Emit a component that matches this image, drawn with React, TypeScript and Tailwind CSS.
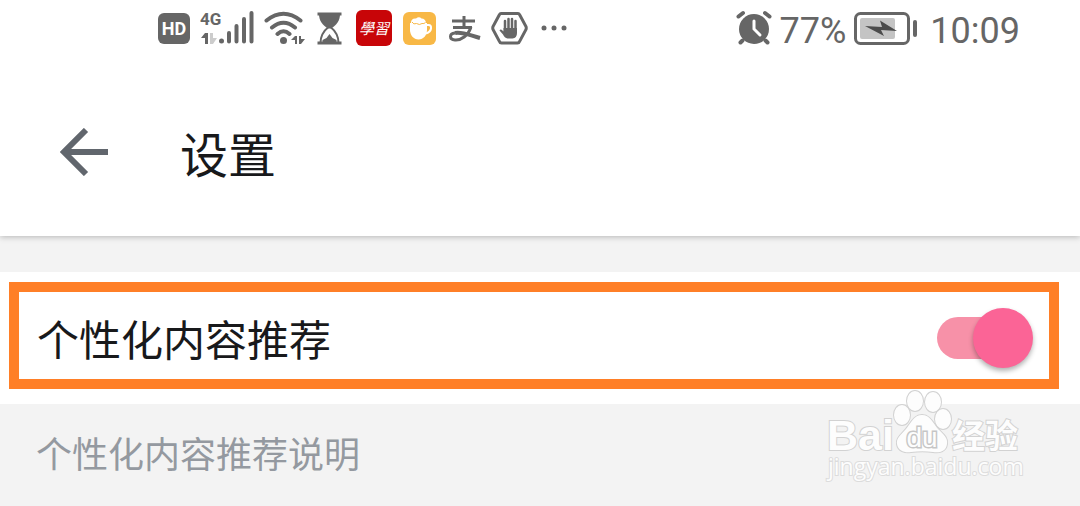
import { useState } from "react";

function HdIcon() {
  return (
    <svg width="32" height="40" viewBox="0 0 32 40" aria-label="HD">
      <rect y="5" width="32" height="31" rx="6" fill="#666" />
      <text x="16" y="27" textAnchor="middle" fontSize="18" fontWeight="700" fill="#fff">
        HD
      </text>
    </svg>
  );
}

function SignalIcon() {
  return (
    <svg width="54" height="40" viewBox="0 0 54 40" aria-label="4G">
      <text x="0" y="17" fontSize="17" fontWeight="700" fill="#666">
        4G
      </text>
      <path d="M5 25h3v11H5v-6H1z" fill="#666" />
      <path d="M10 25h3v5h4l-4 6h-3z" fill="#ccc" />
      <circle cx="21.500" cy="33" r="2.500" fill="#666" />
      <path d="M29 25v8.500M36.500 18v15.500M44 11v22.500M51.500 5v28.500" stroke="#666" strokeWidth="4" strokeLinecap="round" />
    </svg>
  );
}

function WifiIcon() {
  return (
    <svg width="42" height="40" viewBox="0 0 42 40" aria-label="Wi-Fi" fill="none">
      <path d="M2.500 12.500Q19.500-1 36.500 12.500M8 19.500Q19.500 10 31 19.500M13.500 26Q19.500 20.500 25.500 26" stroke="#666" strokeWidth="4" strokeLinecap="round" />
      <circle cx="19.500" cy="32.500" r="3.500" fill="#666" />
      <path d="M31 28h2v8h-2v-4h-4zM35 28h2v3h4l-4 5h-2z" fill="#666" />
    </svg>
  );
}

function HourglassIcon() {
  return (
    <svg width="30" height="40" viewBox="0 0 30 40" aria-hidden="true" fill="none">
      <path d="M1.500 6h24M1.500 35h24" stroke="#666" strokeWidth="3" />
      <path d="M3 6h21c0 7-3.500 11-9 14.500h-3C6.500 17 3 13 3 6z" fill="#666" />
      <path d="M12.500 19C7.500 23 4.500 27 4.500 35M14.500 19c5 4 8 8 8 16" stroke="#666" strokeWidth="2" />
      <path d="M13.500 26l3 4 4 2v3h-14v-3l4-2z" fill="#666" />
    </svg>
  );
}

function StudyIcon() {
  return (
    <svg width="37" height="40" viewBox="0 0 37 40" aria-label="學習">
      <rect y="2" width="36" height="36" rx="6" fill="#c80508" />
      <text
        x="18"
        y="26"
        textAnchor="middle"
        fontSize="15"
        fontStyle="italic"
        fill="#fff"
        className="font-['Noto_Sans_CJK_TC',sans-serif]"
      >
        學習
      </text>
    </svg>
  );
}

function CupIcon() {
  return (
    <svg width="34" height="40" viewBox="0 0 34 40" aria-hidden="true" fill="none">
      <rect y="4" width="33" height="33" rx="6" fill="#f8b846" />
      <path d="M7 15h17v7c0 5-3.500 9.500-8.500 9.500S7 27 7 22z" fill="#fff" />
      <path d="M23.500 17h2q3 0 2.500 3.500t-5 5" stroke="#fff" strokeWidth="2" />
      <path d="M8 15Q8 10 13 10.500q3-2.500 5.500 0 4 0 4.500 4.500z" fill="#fff" />
      <path d="M9 14q1.500 3 4.500 1.500 3 2 5.500 0 2 .500 3.500-1" stroke="#f8b846" strokeWidth="1" />
    </svg>
  );
}

function AlipayIcon() {
  return (
    <svg width="34" height="40" viewBox="0 0 34 40" aria-label="支付宝" fill="none" stroke="#666">
      <path d="M5 13h23M17 8v11M6 19.500h19" strokeWidth="3" />
      <path d="M24 19C21 28 14 32.500 8 32c-6-.500-6-6.500 0-7" strokeWidth="3" />
      <path d="M8 25c7-1.500 14 2 25 5" strokeWidth="4" />
    </svg>
  );
}

function HandIcon() {
  return (
    <svg width="37" height="40" viewBox="0 0 37 40" aria-hidden="true" fill="none">
      <path d="M10 5.500h17q1 0 1.500 1l6.500 12q.500 1.500 0 3l-6.500 12q-.500 1.500-2 1.500h-16q-1.500 0-2-1.500L2 21.500q-.500-1.500 0-3L8.500 6.500q.500-1 1.500-1z" stroke="#666" strokeWidth="3" />
      <path d="M14 13v11M17.500 11v13M21 11v13M24.500 13v11" stroke="#666" strokeWidth="2.500" strokeLinecap="round" />
      <path d="M12.500 20H26v5q0 5-4.500 5.500h-5q-3-.500-4.500-4L8.500 22.500q1-2 3 0l1 1z" fill="#666" />
    </svg>
  );
}

function MoreIcon() {
  return (
    <svg width="32" height="40" viewBox="0 0 32 40" aria-label="更多" fill="#666">
      <circle cx="6" cy="20" r="2.500" />
      <circle cx="16" cy="20" r="2.500" />
      <circle cx="26" cy="20" r="2.500" />
    </svg>
  );
}

function AlarmIcon() {
  return (
    <svg width="36" height="40" viewBox="0 0 36 40" aria-hidden="true" fill="none" strokeLinecap="round">
      <circle cx="18" cy="21" r="15" fill="#666" />
      <path d="M2.500 8.500L7 5M33.500 8.500L29 5M6.500 32.500l-2 2M29.500 32.500l2 2" stroke="#666" strokeWidth="4" />
      <path d="M18 13v8l6 6" stroke="#fff" strokeWidth="3" />
    </svg>
  );
}

function BatteryIcon() {
  return (
    <svg width="64" height="40" viewBox="0 0 64 40" aria-hidden="true" fill="none">
      <rect x="1.500" y="5.500" width="53" height="30" rx="5" stroke="#666" strokeWidth="3" />
      <rect x="6" y="10" width="35" height="21" rx="2" fill="#c4c4c4" />
      <path d="M11 18l17 1-2-6.500L43 23l-16-1 3 6z" fill="#4c4c4c" />
      <path d="M61 14v13" stroke="#666" strokeWidth="4" strokeLinecap="round" />
    </svg>
  );
}

function StatusBar() {
  return (
    <div className="flex h-14 items-center justify-between pr-15 pl-[158px] font-['Roboto',sans-serif] text-[#666]">
      <div className="flex items-center gap-2.5">
        <HdIcon />
        <SignalIcon />
        <WifiIcon />
        <HourglassIcon />
        <StudyIcon />
        <CupIcon />
        <AlipayIcon />
        <HandIcon />
        <MoreIcon />
      </div>
      <div className="flex items-center gap-2">
        <AlarmIcon />
        <span className="pt-1.5 text-[36px] leading-10">77%</span>
        <BatteryIcon />
        <span className="pt-1.5 pl-1 text-[36px] leading-10">10:09</span>
      </div>
    </div>
  );
}

interface SwitchProps {
  id: string;
  checked: boolean;
  onChange: (checked: boolean) => void;
}

function Switch({ id, checked, onChange }: SwitchProps) {
  return (
    <span className="relative flex h-15 w-24 items-center">
      <input
        id={id}
        type="checkbox"
        role="switch"
        checked={checked}
        onChange={(e) => onChange(e.target.checked)}
        className="peer h-[42px] w-20 cursor-pointer appearance-none rounded-full bg-[#d4d4d4] checked:bg-[#f791a8]"
      />
      <span className="pointer-events-none absolute top-0 left-0 size-15 rounded-full bg-[#f4f4f4] shadow-[0_3px_5px_rgba(0,0,0,0.3)] peer-checked:left-9 peer-checked:bg-[#fb6496]" />
    </span>
  );
}

function Watermark() {
  return (
    <svg
      width="204"
      height="100"
      viewBox="0 0 204 100"
      className="pointer-events-none absolute -top-4 right-13"
      fill="#fdfdfd"
      stroke="#d2d2d2"
      strokeWidth="2"
      paintOrder="stroke"
      aria-label="Baidu 经验"
    >
      <text x="3" y="62" fontSize="43" fontWeight="700" className="font-['Liberation_Sans',sans-serif]">
        Bai
      </text>
      <g>
        <ellipse cx="78" cy="27" rx="8" ry="10" />
        <ellipse cx="91" cy="13" rx="8" ry="10" />
        <ellipse cx="109" cy="14" rx="8" ry="10" />
        <ellipse cx="119" cy="31" rx="8" ry="10" />
        <path d="M98 27c8 0 11 8 16 14 6 6 10 9 9 15-1 8-8 9-14 8-7-1-14-1-22 0-6 1-13-1-14-8-1-6 4-9 9-15 5-6 8-14 16-14z" />
      </g>
      <text
        x="98"
        y="59"
        textAnchor="middle"
        fontSize="28"
        stroke="#c6c6c6"
        strokeWidth="3"
        className="font-['Liberation_Sans',sans-serif]"
      >
        du
      </text>
      <text x="128" y="60" fontSize="33" fontWeight="700" className="font-['Noto_Sans_CJK_SC',sans-serif]">
        经验
      </text>
      <text x="4" y="87" fontSize="23" stroke="#dcdcdc" className="font-['Open_Sans',sans-serif]">
        jingyan.baidu.com
      </text>
    </svg>
  );
}

export default function App() {
  const [recommend, setRecommend] = useState(true);

  return (
    <div className="min-h-screen bg-[#f3f3f3] font-['Noto_Sans_CJK_SC',sans-serif] text-[#18191b]">
      <header className="bg-white shadow-[0_1px_6px_rgba(0,0,0,0.25)]">
        <StatusBar />
        <div className="flex items-center gap-18 px-15 pt-[66px] pb-[54px]">
          <button type="button" aria-label="返回" className="cursor-pointer">
            <svg width="48" height="48" viewBox="0 0 48 48" fill="none" stroke="#61666d" strokeWidth="6">
              <path d="M26 2L4 24l22 22M4 24h44" />
            </svg>
          </button>
          <h1 className="text-[48px] leading-15">设置</h1>
        </div>
      </header>

      <main className="pt-9">
        <div className="bg-white pt-2.5 pr-[21px] pb-[15px] pl-[9px]">
          <div className="flex items-center justify-between border-10 border-[#ff7f27] pt-4 pr-4 pb-[11px] pl-[18px]">
            <label htmlFor="recommend" className="text-[42px] leading-15">
              个性化内容推荐
            </label>
            <Switch id="recommend" checked={recommend} onChange={setRecommend} />
          </div>
        </div>

        <div className="relative px-9 pt-[18px] pb-5">
          <p className="text-[36px] leading-15 text-[#9499a0]">个性化内容推荐说明</p>
          <Watermark />
        </div>
      </main>
    </div>
  );
}
